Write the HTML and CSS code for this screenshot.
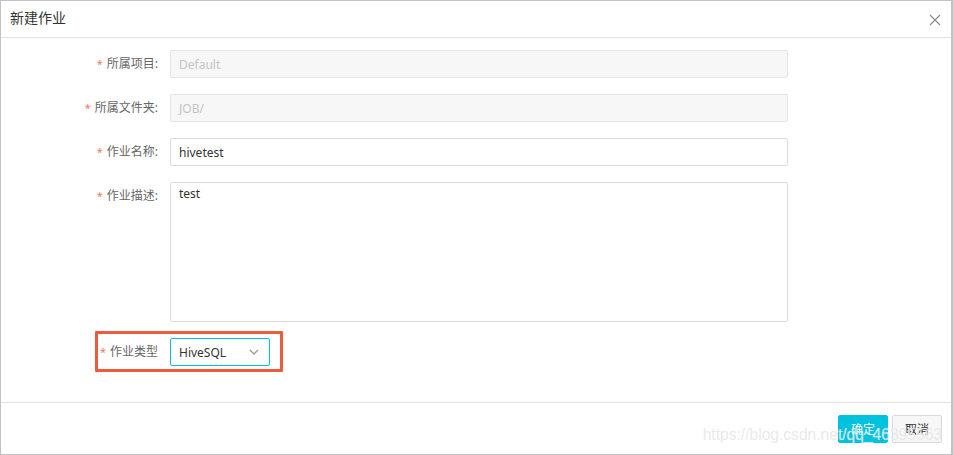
FILE: index.html
```html
<!DOCTYPE html>
<html lang="zh-CN">
<head>
<meta charset="utf-8">
<title>新建作业</title>
<link rel="stylesheet" href="styles.css">
</head>
<body>
<div class="dialog">
  <div class="dialog-header">
    <span class="dialog-title">新建作业</span>
    <span class="close" aria-label="关闭">
      <svg width="12" height="12" viewBox="0 0 12 12"><path d="M1 1L11 11M11 1L1 11" stroke="#8c8c8c" stroke-width="1.2" fill="none"/></svg>
    </span>
  </div>
  <div class="dialog-body">
    <div class="form-row">
      <label class="label"><span class="req">*</span>所属项目:</label>
      <div class="input disabled">Default</div>
    </div>
    <div class="form-row">
      <label class="label"><span class="req">*</span>所属文件夹:</label>
      <div class="input disabled">JOB/</div>
    </div>
    <div class="form-row">
      <label class="label"><span class="req">*</span>作业名称:</label>
      <div class="input">hivetest</div>
    </div>
    <div class="form-row top">
      <label class="label"><span class="req">*</span>作业描述:</label>
      <div class="input textarea">test</div>
    </div>
    <div class="form-row highlight-row">
      <label class="label"><span class="req">*</span>作业类型</label>
      <div class="select">
        <span>HiveSQL</span>
        <svg width="10" height="6" viewBox="0 0 10 6"><path d="M1 1L5 5L9 1" stroke="#9a9a9a" stroke-width="1.3" fill="none"/></svg>
      </div>
      <div class="highlight"></div>
    </div>
  </div>
  <div class="dialog-footer">
    <button class="btn primary">确定</button>
    <button class="btn">取消</button>
    <div class="watermark">https://blog.csdn.net/qq_46395563</div>
  </div>
</div>
</body>
</html>
```

FILE: styles.css
```css
* { box-sizing: border-box; }
html, body { margin: 0; padding: 0; background: #fff; }
body {
  font-family: "Noto Sans", "Noto Sans CJK SC", sans-serif;
  font-size: 12px;
  color: #333;
}
.dialog {
  width: 953px;
  height: 455px;
  border: 1px solid #c3c3c3;
  border-right-width: 2px;
  display: flex;
  flex-direction: column;
  background: #fff;
}
.dialog-header {
  height: 37px;
  border-bottom: 1px solid #e3e3e3;
  display: flex;
  align-items: center;
  justify-content: space-between;
  padding: 0 10px 0 9px;
  flex: none;
}
.dialog-title {
  font-size: 14px;
  color: #333;
  line-height: 20px;
  margin-top: -2px;
}
.close { display: flex; align-items: center; margin-top: 1px; }
.dialog-body {
  height: 364px;
  padding-top: 12px;
  display: flex;
  flex-direction: column;
  gap: 16px;
  flex: none;
}
.form-row {
  display: flex;
  align-items: center;
  gap: 12px;
}
.form-row.top { align-items: flex-start; }
.form-row.top .label { padding-top: 5px; }
.label {
  width: 157px;
  text-align: right;
  color: #666;
  font-size: 12px;
  line-height: 18px;
  flex: none;
}
.req { color: #ec7a66; margin-right: 4px; font-size: 11px; }
.input {
  width: 618px;
  height: 28px;
  border: 1px solid #dcdcdc;
  border-radius: 2px;
  padding: 0 8px;
  display: flex;
  align-items: center;
  color: #333;
  font-size: 12px;
}
.input.disabled {
  background: #f7f7f7;
  border-color: #e6e6e6;
  color: #c4c4c4;
}
.input.textarea {
  height: 140px;
  align-items: flex-start;
  padding-top: 2px;
}
.highlight-row { position: relative; }
.select {
  width: 100px;
  height: 28px;
  border: 1px solid #00c1de;
  border-radius: 2px;
  padding: 0 10px 0 8px;
  display: flex;
  align-items: center;
  justify-content: space-between;
  font-size: 12px;
  color: #333;
}
.highlight {
  position: absolute;
  left: 94px;
  top: -7px;
  width: 188px;
  height: 41px;
  border: 3px solid #ef5a3a;
  border-radius: 1px;
  pointer-events: none;
}
.dialog-footer {
  flex: 1;
  border-top: 1px solid #e3e3e3;
  display: flex;
  justify-content: flex-end;
  align-items: flex-start;
  gap: 4px;
  padding: 12px 9px 0 0;
  position: relative;
}
.btn {
  width: 50px;
  height: 28px;
  border: 1px solid #d9d9d9;
  border-radius: 2px;
  background: #f7f7f7;
  color: #333;
  font-family: inherit;
  font-size: 12px;
  padding: 0;
}
.btn.primary {
  background: #00c1de;
  border-color: #00c1de;
  color: #fff;
}
.watermark {
  position: absolute;
  right: 9px;
  top: 23px;
  font-family: "Liberation Sans", Arial, sans-serif;
  font-size: 15.6px;
  color: rgba(228, 228, 228, 0.8);
  text-shadow: 0 0 1px rgba(255,255,255,0.6);
  pointer-events: none;
}
```
